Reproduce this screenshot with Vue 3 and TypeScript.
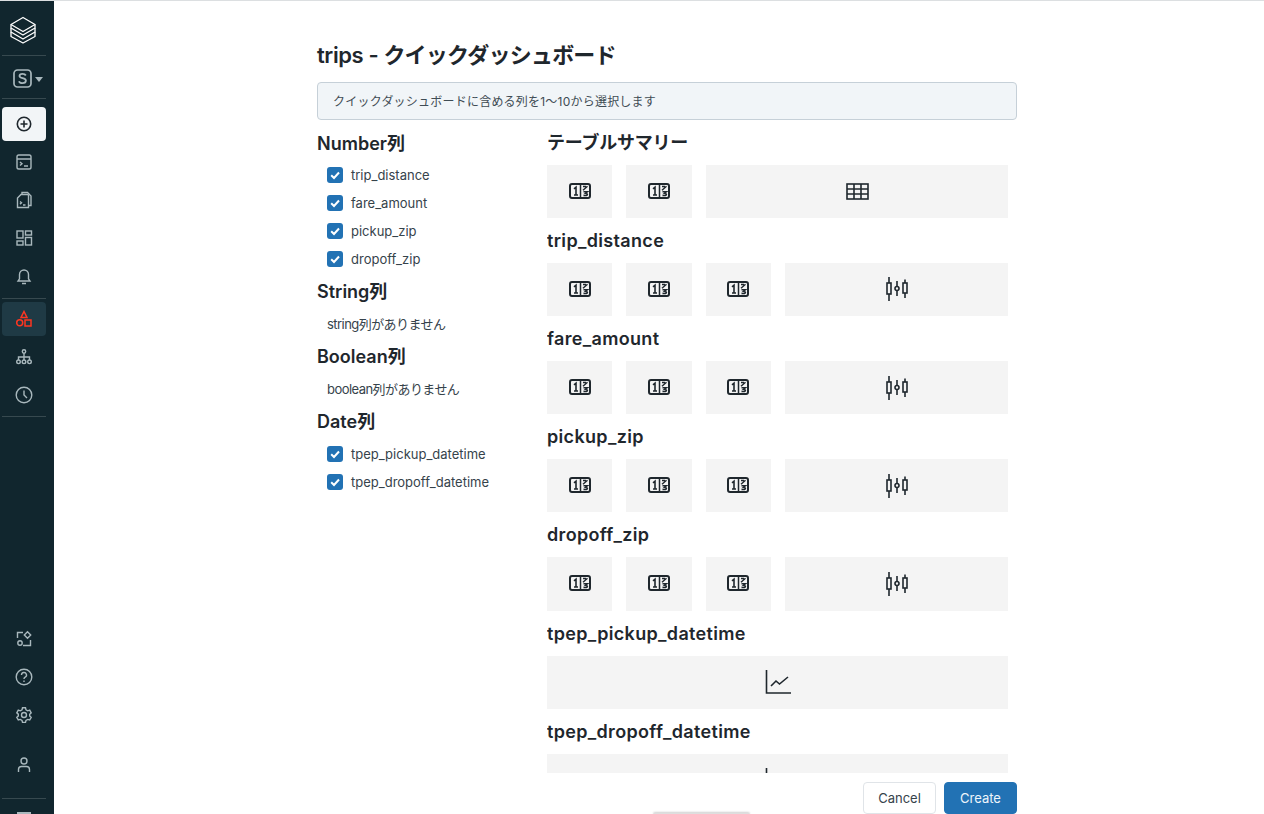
<script setup lang="ts">
interface Tile { kind: 'counter' | 'table' | 'candle' | 'chart'; span: number }
interface Section { title: string; jp?: boolean; tiles: Tile[] }

const counter = (): Tile => ({ kind: 'counter', span: 1 })
const numeric = (title: string): Section => ({
  title,
  tiles: [counter(), counter(), counter(), { kind: 'candle', span: 3 }],
})
const dated = (title: string): Section => ({ title, tiles: [{ kind: 'chart', span: 6 }] })

const sections: Section[] = [
  { title: 'テーブルサマリー', jp: true, tiles: [counter(), counter(), { kind: 'table', span: 4 }] },
  numeric('trip_distance'),
  numeric('fare_amount'),
  numeric('pickup_zip'),
  numeric('dropoff_zip'),
  dated('tpep_pickup_datetime'),
  dated('tpep_dropoff_datetime'),
]

const groups: { title: string; columns: string[]; empty?: string }[] = [
  { title: 'Number列', columns: ['trip_distance', 'fare_amount', 'pickup_zip', 'dropoff_zip'] },
  { title: 'String列', columns: [], empty: 'string列がありません' },
  { title: 'Boolean列', columns: [], empty: 'boolean列がありません' },
  { title: 'Date列', columns: ['tpep_pickup_datetime', 'tpep_dropoff_datetime'] },
]
</script>

<template>
  <div class="shell">
    <nav class="rail">
      <div class="logo">
        <svg width="26" height="28" viewBox="0 0 26 28" fill="none" stroke="#fff" stroke-width="1.300" stroke-linejoin="round">
          <path d="M13 1.500 25 8.500 13 15.500 1 8.500Z" />
          <path d="M1 8.500V12L13 19 25 12V8.500" />
          <path d="M1 12v4L13 23 25 16v-4" />
          <path d="M1 16v4.500L13 27 25 20.500V16" />
        </svg>
      </div>
      <div class="rule"></div>
      <div class="workspace">
        <svg width="19" height="19" viewBox="0 0 19 19" fill="none">
          <rect x="1" y="1" width="17" height="17" rx="3.500" stroke="#a9b8bd" stroke-width="1.700" />
          <path d="M12.800 6.500C12.200 5.200 11 4.800 9.500 4.800c-1.700 0-3 .8-3 2.200 0 3 6.400 1.300 6.400 4.600 0 1.600-1.500 2.600-3.400 2.600-1.600 0-3-.7-3.500-2" stroke="#a9b8bd" stroke-width="1.800" />
        </svg>
        <span class="caret"></span>
      </div>
      <div class="rule"></div>

      <div class="items first">
        <div class="item light">
          <svg class="ic" viewBox="0 0 18 18"><circle cx="9" cy="9" r="6.700" stroke="#1f272d" stroke-width="1.600" /><path d="M9 5.500v7M5.500 9h7" stroke="#1f272d" stroke-width="1.600" /></svg>
        </div>
        <div class="item">
          <svg class="ic" viewBox="0 0 18 18"><rect x="2" y="2" width="14" height="14" rx="1.800" /><path d="M2 6h14M5 9l2 1.800L5 12.600M9 13h4" /></svg>
        </div>
        <div class="item">
          <svg class="ic" viewBox="0 0 18 18"><path d="M7 3V1.500h5.500L16 5v9.500h-2.500" /><path d="M6 3.500h6.500a1 1 0 0 1 1 1V16.500H2.500V7Z" /><path d="M5 10.500l1.500 1.300L5 13.100M8 14h2.500" /></svg>
        </div>
        <div class="item">
          <svg class="ic" viewBox="0 0 18 18"><rect x="2" y="2" width="6" height="7" /><rect x="10.500" y="2" width="6" height="4" /><rect x="2" y="12" width="6" height="4" /><rect x="10.500" y="8.500" width="6" height="7.500" /></svg>
        </div>
        <div class="item">
          <svg class="ic" viewBox="0 0 18 18"><path d="M3 14h12l-1.500-2.200V7.500a4.500 4.500 0 0 0-9 0v4.300ZM7 16.500h4" /></svg>
        </div>
      </div>
      <div class="rule tight"></div>
      <div class="items">
        <div class="item active">
          <svg class="ic red" viewBox="0 0 18 18"><path d="M9 1.500 12 7.500H6Z" /><circle cx="4.700" cy="12.800" r="3" /><rect x="10" y="10" width="6" height="6" /></svg>
        </div>
        <div class="item">
          <svg class="ic" viewBox="0 0 18 18"><circle cx="9" cy="3.500" r="1.700" /><path d="M9 5.200V12M3.500 12V9h11v3" /><circle cx="3.500" cy="13.800" r="1.800" /><circle cx="9" cy="13.800" r="1.800" /><circle cx="14.500" cy="13.800" r="1.800" /></svg>
        </div>
        <div class="item">
          <svg class="ic" viewBox="0 0 18 18"><circle cx="9" cy="9" r="7.800" /><path d="M9 4.500V9l3 3" /></svg>
        </div>
      </div>
      <div class="rule tight"></div>

      <div class="spacer"></div>

      <div class="items">
        <div class="item">
          <svg class="ic" viewBox="0 0 18 18"><path d="M8 2.500H2.500V8M8 15.500h7.500V10" /><circle cx="5" cy="13" r="2.200" /><path d="M12.500 1.800 15.700 5 12.500 8.200 9.300 5Z" /></svg>
        </div>
        <div class="item">
          <svg class="ic" viewBox="0 0 18 18"><circle cx="9" cy="9" r="7.800" /><path d="M6.500 7a2.500 2.500 0 1 1 3.700 2.200C9.300 9.700 9 10.200 9 11" /><path d="M9 12.500v1.500" /></svg>
        </div>
        <div class="item">
          <svg class="ic" viewBox="0 0 18 18"><path d="M7.500 1.800h3l.5 2 1.700 1 2-.6 1.500 2.600-1.500 1.400v1.800l1.500 1.400-1.500 2.600-2-.6-1.700 1-.5 2h-3l-.5-2-1.700-1-2 .6-1.500-2.600L3.300 9.900V8.100L1.800 6.800l1.500-2.600 2 .6 1.700-1Z" /><circle cx="9" cy="9" r="2.500" /></svg>
        </div>
        <div class="item profile">
          <svg class="ic" viewBox="0 0 18 18"><circle cx="9" cy="5" r="3" /><path d="M3.500 16v-2.500a3 3 0 0 1 3-3h5a3 3 0 0 1 3 3V16" /></svg>
        </div>
      </div>
      <div class="rule foot"></div>
      <div class="stub"></div>
    </nav>

    <main class="page">
      <div class="panel">
        <h1 class="title">trips - <span class="jp">クイックダッシュボード</span></h1>
        <div class="notice"><span class="notice-text">クイックダッシュボードに含める列を1〜10から選択します</span></div>

        <div class="body">
          <aside class="picker">
            <section v-for="g in groups" :key="g.title" class="group">
              <h2 class="heading">{{ g.title }}</h2>
              <label v-for="c in g.columns" :key="c" class="row">
                <span class="box">
                  <svg width="12" height="12" viewBox="0 0 12 12" fill="none"><path d="M2.200 6.300 5 9 10 3.500" stroke="#fff" stroke-width="2" /></svg>
                </span>
                {{ c }}
              </label>
              <div v-if="g.empty" class="row none">{{ g.empty }}</div>
            </section>
          </aside>

          <div class="preview">
            <section v-for="s in sections" :key="s.title" class="block">
              <h2 class="heading" :class="s.jp ? 'kana' : 'latin'">{{ s.title }}</h2>
              <div class="tiles">
                <div
                  v-for="(t, i) in s.tiles"
                  :key="i"
                  class="tile"
                  :class="`span${t.span}`"
                >
                  <svg v-if="t.kind === 'counter'" class="up" width="22" height="16" viewBox="0 0 22 16" fill="none" stroke="#1f272d">
                    <rect x="1" y="1" width="20" height="14" rx="2" stroke-width="2" />
                    <path d="M11.500 1v14" stroke-width="1.500" />
                    <path d="M5 5.800 7 4.200V12M5 12h4" stroke-width="1.600" />
                    <path d="M14 7.200 18.500 3.200M14 3.500h3" stroke-width="1.400" />
                    <path d="M14.500 8.800h4L16.300 10.500c1.400 0 2.200.4 2.200 1.100s-1.400 1.300-4 .9" stroke-width="1.400" />
                  </svg>
                  <svg v-else-if="t.kind === 'table'" width="23" height="17" viewBox="0 0 23 17" fill="none" stroke="#1f272d" stroke-width="1.600">
                    <rect x="1" y="1" width="21" height="15" />
                    <path d="M1 6h21M1 11h21M8 1v15M15 1v15" />
                  </svg>
                  <svg v-else-if="t.kind === 'candle'" width="24" height="26" viewBox="0 0 24 26" fill="none" stroke="#1f272d" stroke-width="1.600">
                    <rect x="2" y="7" width="4" height="11" />
                    <path d="M4 1v6M4 18v7" />
                    <circle cx="12" cy="12.500" r="2" />
                    <path d="M12 5v5.500M12 14.500V20" />
                    <rect x="18" y="7" width="4" height="10" />
                    <path d="M20 3.500V7M20 17v5" />
                  </svg>
                  <svg v-else width="26" height="24" viewBox="0 0 26 24" fill="none" stroke="#1f272d" stroke-width="1.600">
                    <path d="M1.500 0v23H26" />
                    <path d="M6 16l5-5 3.500 3L23 7" />
                  </svg>
                </div>
              </div>
            </section>
          </div>
        </div>

        <footer class="actions">
          <button class="btn">Cancel</button>
          <button class="btn primary">Create</button>
        </footer>
      </div>
      <div class="peek"></div>
    </main>
  </div>
</template>

<style>
html, body { margin: 0; height: 100%; overflow: hidden; background: #fff; }
</style>

<style scoped>
* { box-sizing: border-box; }
.shell {
  display: flex;
  height: 100vh;
  overflow: hidden;
  border-top: 1px solid #dcdfe1;
  font-family: Inter, "Noto Sans CJK JP", sans-serif;
  color: #1f272d;
}
.rail {
  width: 54px;
  flex: none;
  display: flex;
  flex-direction: column;
  background: #11262e;
  padding: 0 8px 0 2px;
  overflow: hidden;
}
.logo { height: 54px; display: flex; align-items: center; justify-content: center; flex: none; padding: 4px 3px 0 0; }
.rule { height: 1px; background: #37494f; flex: none; }
.workspace { height: 42px; display: flex; align-items: center; gap: 3px; flex: none; padding: 2px 0 0 11px; }
.caret { width: 0; height: 0; border: 4px solid transparent; border-top: 5px solid #a9b8bd; border-bottom: 0; margin-top: 2px; }
.items { display: flex; flex-direction: column; gap: 4px; flex: none; padding: 3px 0 4px; }
.items.first { padding: 8px 0 5px; }
.item { width: 44px; height: 34px; border-radius: 4px; display: flex; align-items: center; justify-content: center; }
.item.light { background: #f2f5f7; }
.item.active { background: #1f3a45; }
.item.profile { margin-top: 12px; }
.ic { width: 18px; height: 18px; fill: none; stroke: #a9b8bd; stroke-width: 1.400; }
.ic.red { stroke: #ff3621; stroke-width: 1.500; }
.spacer { flex: 1; }
.rule.foot { margin-top: 12px; }
.stub { height: 15px; margin: 0 auto; flex: none; width: 14px; border-bottom: 2px solid #a9b8bd; }

.page { flex: 1; min-width: 0; padding: 0 247px 0 263px; position: relative; }
.panel { height: 100%; display: flex; flex-direction: column; }
.title { margin: 0; padding-top: 40px; height: 81px; font-size: 22px; line-height: 28px; font-weight: 600; flex: none; letter-spacing: -.4px; }
.jp { letter-spacing: -.8px; }
.notice {
  height: 38px;
  flex: none;
  display: flex;
  align-items: center;
  padding: 0 15px 2px;
  background: #f1f5f8;
  border: 1px solid #c6d0d8;
  border-radius: 4px;
  font-size: 12px;
  color: #3f4c54;
}
.notice-text { letter-spacing: .22px; }
.body { flex: 1; min-height: 0; display: flex; overflow: hidden; }
.picker { width: 230px; flex: none; padding-top: 11.800px; }
.heading { margin: 0; font-size: 18px; line-height: 24px; font-weight: 600; }
.group { display: flow-root; margin-bottom: 6.700px; }
.group .heading { margin-bottom: 6.400px; }
.group:first-child .heading { margin-bottom: 5.400px; }
.group:first-child { margin-bottom: 6.700px; }
.row { display: flex; align-items: center; gap: 8px; height: 28px; padding-left: 10px; font-size: 13px; color: #36434b; }
.row.none { letter-spacing: -.55px; margin: -1px 0 1px; }
.box { width: 16px; height: 16px; border-radius: 3px; background: #2272b4; display: flex; align-items: center; justify-content: center; }
.preview { flex: 1; min-width: 0; padding-top: 10.600px; overflow: hidden; }
.block { margin-bottom: 11px; width: 461px; overflow: hidden; }
.block .heading { margin-bottom: 10px; }
.latin { letter-spacing: .33px; }
.kana { letter-spacing: -.25px; }
.tiles { display: grid; grid-template-columns: repeat(6, 1fr); gap: 14.200px; width: 461.900px; }
.tile { height: 53.200px; background: #f4f4f4; display: flex; align-items: center; justify-content: center; }
.up { margin-top: -1px; }
.span1 { grid-column: span 1; }
.span3 { grid-column: span 3; }
.span4 { grid-column: span 4; }
.span6 { grid-column: span 6; }
.actions { flex: none; height: 41px; padding-top: 9px; display: flex; justify-content: flex-end; gap: 8px; }
.btn {
  width: 73px;
  height: 32px;
  border: 1px solid #e0e4e8;
  border-radius: 4px;
  background: #fff;
  font: 13px Inter, sans-serif;
  color: #36434b;
  padding: 0;
}
.btn.primary { background: #2272b4; border-color: #2272b4; color: #eef5fb; }
.peek {
  position: absolute;
  left: 599px;
  bottom: -1px;
  width: 97px;
  height: 2px;
  background: #dedede;
  box-shadow: 0 -1px 2px rgba(0, 0, 0, .2);
  border-radius: 2px 2px 0 0;
}
</style>
